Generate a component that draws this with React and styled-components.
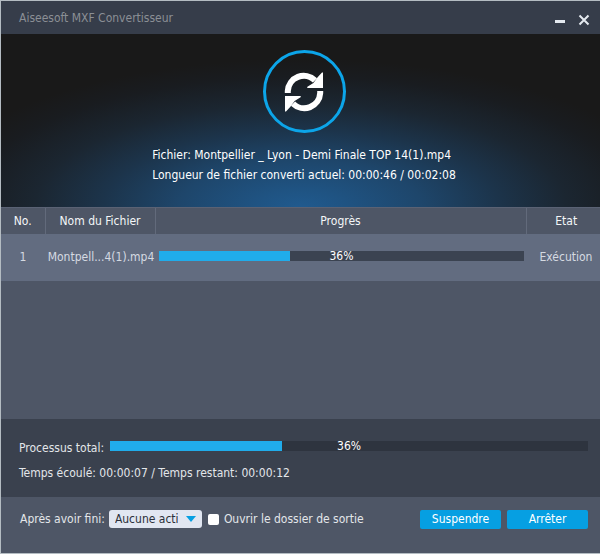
import { useState } from 'react';
import styled, { createGlobalStyle } from 'styled-components';

const GlobalStyle = createGlobalStyle`
  * {
    box-sizing: border-box;
  }
  body {
    margin: 0;
    font-family: 'DejaVu Sans Condensed', 'Noto Sans', sans-serif;
    font-size: 12px;
    line-height: 20px;
    color: #e3e6ea;
  }
  button,
  select {
    font: inherit;
  }
`;

const SWindow = styled.div`
  display: flex;
  flex-direction: column;
  min-height: 100vh;
  background-color: #4e5666;
  border: 1px solid #b4bcc2;
  border-right: 0;
`;

const STitleBar = styled.header`
  display: flex;
  align-items: center;
  justify-content: space-between;
  height: 33px;
  padding: 0 9px 0 18px;
  background-color: #363d4a;
`;

const STitle = styled.h1`
  margin: 0;
  font-size: 12px;
  font-weight: 400;
  color: #8b8f95;
`;

const SWindowActions = styled.div`
  display: flex;
  gap: 8px;
  padding-top: 4px;
`;

const SIconButton = styled.button`
  display: flex;
  padding: 0;
  border: 0;
  background: none;
  color: #e4e9ef;
`;

const SHero = styled.section`
  display: flex;
  flex-direction: column;
  align-items: center;
  height: 173px;
  padding: 16px 0 0 7px;
  color: #fff;
  background: radial-gradient(
      ellipse 380px 148px at 50% 100%,
      #205a8e 0%,
      #1f5382 12%,
      #1e466b 32%,
      #1c344b 52%,
      #1b2631 70%,
      #191c20 88%,
      #191919 100%
    )
    #191919;
`;

const SRing = styled.div`
  display: flex;
  align-items: center;
  justify-content: center;
  width: 83px;
  height: 83px;
  margin-bottom: 12px;
  border: 3px solid #0ca5e9;
  border-radius: 50%;
`;

const SFileInfo = styled.p`
  margin: 0;
`;

const STable = styled.table`
  width: 100%;
  table-layout: fixed;
  border-collapse: collapse;
`;

const SCol = styled.col`
  width: ${({ $width }) => $width};
`;

const SHeadCell = styled.th`
  height: 26px;
  padding: 0;
  font-weight: 400;
  color: #f4f6f8;
  border-top: 1px solid #5a6274;

  & + & {
    border-left: 1px solid #626a7b;
  }
  &:last-child {
    padding-left: 6px;
  }
`;

const SRow = styled.tr`
  height: 47px;
  background-color: #626c80;
`;

const SCell = styled.td`
  padding: ${({ $bar }) => ($bar ? '0 2px 2px 4px' : '0')};
  text-align: center;
  white-space: nowrap;
  color: #d5dae2;

  &:nth-child(2) {
    padding-left: 2px;
  }
  &:last-child {
    padding-left: 6px;
  }
`;

const SList = styled.main`
  flex: 1;
`;

const STrack = styled.div`
  display: grid;
  flex: 1;
  height: 10px;
  background-color: ${({ $dark }) => ($dark ? '#2e343f' : '#3b4351')};
`;

const SFill = styled.div`
  grid-area: 1 / 1;
  background-color: #20aceb;
`;

const SPercent = styled.span`
  grid-area: 1 / 1;
  place-self: center;
  line-height: 10px;
  color: #fff;
`;

const STotal = styled.section`
  display: flex;
  flex-direction: column;
  gap: 8px;
  height: 78px;
  padding: 19px 12px 0 18px;
  background-color: #3a414e;
`;

const STotalRow = styled.div`
  display: flex;
  align-items: center;
  gap: 6px;
  padding-bottom: 1px;
`;

const STotalLabel = styled.span`
  height: 16px;
`;

const SFooter = styled.footer`
  display: flex;
  align-items: center;
  gap: 6px;
  height: 56px;
  padding: 0 12px 12px 19px;
`;

const SField = styled.div`
  display: flex;
  align-items: center;
  gap: 4px;
`;

const SSelectBox = styled.div`
  display: grid;
  align-items: center;
  width: 93px;
`;

const SSelect = styled.select`
  grid-area: 1 / 1;
  width: 100%;
  height: 18px;
  padding: 0 24px 0 6px;
  border: 0;
  border-radius: 3px;
  background-color: #e1e6f1;
  color: #2b303a;
  line-height: 18px;
  text-overflow: clip;
  appearance: none;
`;

const SArrow = styled.svg`
  grid-area: 1 / 1;
  justify-self: end;
  margin-right: 6px;
  pointer-events: none;
`;

const SCheckLabel = styled.label`
  display: flex;
  align-items: center;
  gap: 5px;
  margin-right: auto;
`;

const SCheckbox = styled.input`
  width: 11px;
  height: 11px;
  margin: 0;
  border-radius: 2px;
  background-color: #fff;
  appearance: none;

  &:checked {
    border: 3px solid #fff;
    background-color: #069fe2;
  }
`;

const SButton = styled.button`
  width: 81px;
  height: 19px;
  padding: 0;
  border: 0;
  border-radius: 2px;
  background-color: #069fe2;
  color: #fff;
  line-height: 19px;
`;

const SyncIcon = () => (
  <svg width='40' height='40' viewBox='0 0 40 40' aria-hidden='true'>
    <g id='half'>
      <path
        d='M3.8 21 V19 A16 16 0 0 1 31 8.4'
        fill='none'
        stroke='#fff'
        strokeWidth='6'
      />
      <path
        d='M39 .5 V16 H24 Q22.4 16 23.4 14.8 L29.4 11 L33.6 5.2 L38 .4 Z'
        fill='#fff'
      />
    </g>
    <use href='#half' transform='rotate(180 20 20)' />
  </svg>
);

const ProgressBar = ({ value, label, dark }) => (
  <STrack
    role='progressbar'
    aria-label={label}
    aria-valuenow={value}
    aria-valuemin={0}
    aria-valuemax={100}
    $dark={dark}
  >
    <SFill style={{ width: `${value}%` }} />
    <SPercent>{value}%</SPercent>
  </STrack>
);

const files = [
  { id: 1, name: 'Montpell...4(1).mp4', progress: 36, state: 'Exécution' },
];

const App = () => {
  const [action, setAction] = useState('none');
  const [openFolder, setOpenFolder] = useState(false);

  return (
    <>
      <GlobalStyle />
      <SWindow>
        <STitleBar>
          <STitle>Aiseesoft MXF Convertisseur</STitle>
          <SWindowActions>
            <SIconButton type='button' aria-label='Réduire'>
              <svg width='18' height='14' viewBox='0 0 18 14'>
                <path d='M4 8.5 H14' stroke='currentColor' strokeWidth='3' />
              </svg>
            </SIconButton>
            <SIconButton type='button' aria-label='Fermer'>
              <svg width='14' height='14' viewBox='0 0 14 14'>
                <path
                  d='M2.5 2.5 L11.5 11.5 M11.5 2.5 L2.5 11.5'
                  stroke='currentColor'
                  strokeWidth='2'
                />
              </svg>
            </SIconButton>
          </SWindowActions>
        </STitleBar>

        <SHero>
          <SRing>
            <SyncIcon />
          </SRing>
          <div>
            <SFileInfo>
              Fichier: Montpellier _ Lyon - Demi Finale TOP 14(1).mp4
            </SFileInfo>
            <SFileInfo>
              Longueur de fichier converti actuel: 00:00:46 / 00:02:08
            </SFileInfo>
          </div>
        </SHero>

        <SList>
          <STable>
            <colgroup>
              <SCol $width='44px' />
              <SCol $width='110px' />
              <SCol />
              <SCol $width='74px' />
            </colgroup>
            <thead>
              <tr>
                <SHeadCell>No.</SHeadCell>
                <SHeadCell>Nom du Fichier</SHeadCell>
                <SHeadCell>Progrès</SHeadCell>
                <SHeadCell>Etat</SHeadCell>
              </tr>
            </thead>
            <tbody>
              {files.map((file) => (
                <SRow key={file.id}>
                  <SCell>{file.id}</SCell>
                  <SCell>{file.name}</SCell>
                  <SCell $bar>
                    <ProgressBar value={file.progress} label={file.name} />
                  </SCell>
                  <SCell>{file.state}</SCell>
                </SRow>
              ))}
            </tbody>
          </STable>
        </SList>

        <STotal>
          <STotalRow>
            <STotalLabel>Processus total:</STotalLabel>
            <ProgressBar value={36} label='Processus total' dark />
          </STotalRow>
          <span>Temps écoulé: 00:00:07 / Temps restant: 00:00:12</span>
        </STotal>

        <SFooter>
          <SField>
            <label htmlFor='after'>Après avoir fini:</label>
            <SSelectBox>
              <SSelect
                id='after'
                value={action}
                onChange={(e) => setAction(e.target.value)}
              >
                <option value='none'>Aucune action</option>
              </SSelect>
              <SArrow
                width='10'
                height='6'
                viewBox='0 0 10 6'
                aria-hidden='true'
              >
                <path d='M0 0 H10 L5 6 Z' fill='#069fe2' />
              </SArrow>
            </SSelectBox>
          </SField>
          <SCheckLabel>
            <SCheckbox
              type='checkbox'
              checked={openFolder}
              onChange={(e) => setOpenFolder(e.target.checked)}
            />
            Ouvrir le dossier de sortie
          </SCheckLabel>
          <SButton type='button'>Suspendre</SButton>
          <SButton type='button'>Arrêter</SButton>
        </SFooter>
      </SWindow>
    </>
  );
};

export default App;
